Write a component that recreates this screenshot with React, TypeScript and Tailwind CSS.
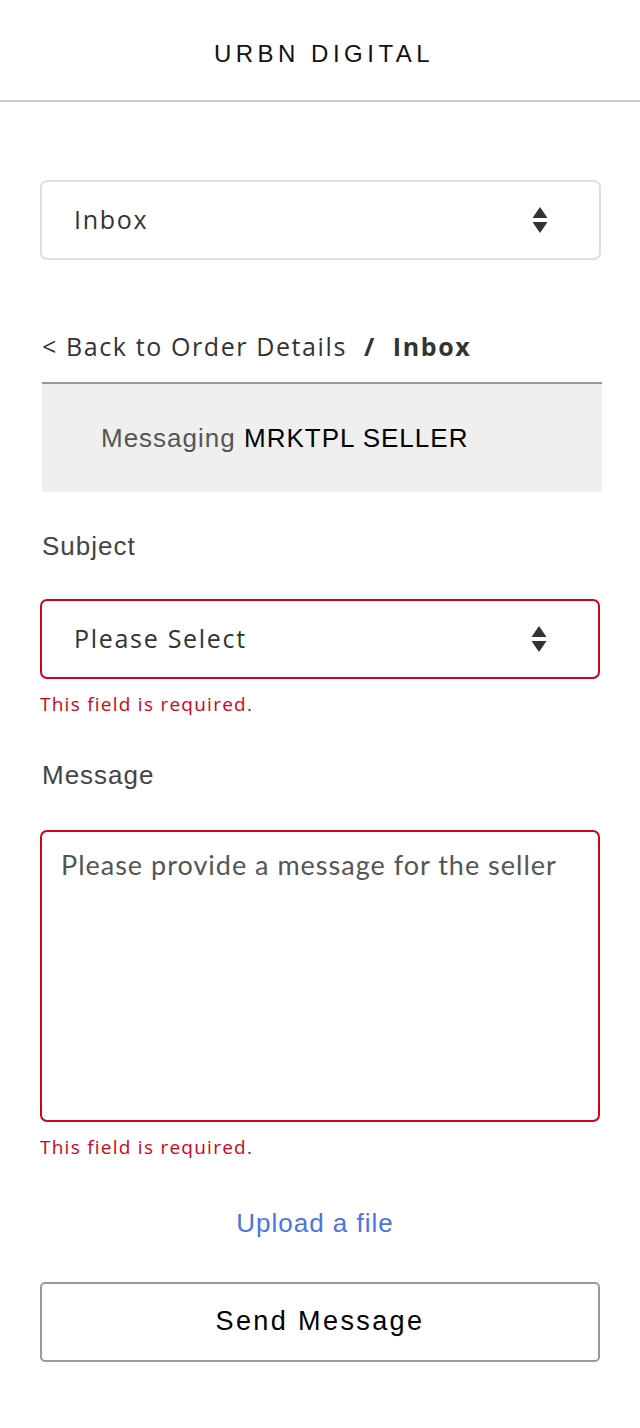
import React from "react";

const helv = { fontFamily: '"Liberation Sans", Arial, sans-serif' };
const open = { fontFamily: '"Open Sans", "Noto Sans", sans-serif' };
const lato = { fontFamily: 'Lato, "Open Sans", sans-serif' };

function Arrows() {
	return (
		<svg width="16" height="30" viewBox="0 0 16 30" className="shrink-0">
			<path d="M8 2 L15.5 13 L0.5 13 Z" fill="#333" />
			<path d="M0.5 17 L15.5 17 L8 28 Z" fill="#333" />
		</svg>
	);
}

function SelectBox({ label, error }: { label: string; error?: boolean }) {
	return (
		<div
			className={`flex h-[80px] items-center justify-between rounded-[7px] border-2 bg-white pr-[51px] pl-[32px] ${
				error ? "border-[#d0021b]" : "border-[#dedede]"
			}`}
		>
			<span className="text-[25px] tracking-[1.7px] text-[#333]" style={open}>
				{label}
			</span>
			<Arrows />
		</div>
	);
}

function ErrorText() {
	return (
		<p
			className="mt-[12px] text-[19px] leading-[26px] tracking-[1.25px] text-[#d0021b]"
			style={open}
		>
			This field is required.
		</p>
	);
}

export default function App() {
	return (
		<div className="min-h-[1428px] bg-white">
			<header className="flex h-[102px] items-center justify-center border-b-2 border-[#cfcfcf] pt-[8px] pl-[8px]">
				<h1
					className="text-[24px] tracking-[4.5px] text-[#111]"
					style={helv}
				>
					URBN DIGITAL
				</h1>
			</header>

			<main className="px-[40px] pt-[78px] pb-[66px]">
				<div className="mr-[-1px]">
					<SelectBox label="Inbox" />
				</div>

				<nav
					className="mt-[68px] flex items-center pl-[2px] text-[25px] tracking-[1.6px] text-[#333]"
					style={open}
				>
					<span>&lt; Back to Order Details</span>
					<span className="mx-[17px] font-bold">/</span>
					<span className="font-bold">Inbox</span>
				</nav>

				<div className="mt-[16px] ml-[2px] mr-[-2px] border-t-2 border-[#999] bg-[#efefef] py-[40px] pl-[59px]">
					<p className="text-[26px] leading-[28px] tracking-[1px]" style={helv}>
						<span className="text-[#555]">Messaging </span>
						<span className="text-black">MRKTPL SELLER</span>
					</p>
				</div>

				<label
					className="mt-[40px] block pl-[2px] text-[26px] leading-[28px] tracking-[1px] text-[#444]"
					style={helv}
				>
					Subject
				</label>
				<div className="mt-[39px]">
					<SelectBox label="Please Select" error />
				</div>
				<ErrorText />

				<label
					className="mt-[44px] block pl-[2px] text-[26px] leading-[28px] tracking-[1px] text-[#444]"
					style={helv}
				>
					Message
				</label>
				<div className="mt-[41px] h-[292px] rounded-[7px] border-2 border-[#d0021b] px-[19px] pt-[16px]">
					<p className="text-[27px] leading-[34px] tracking-[1px] text-[#555]" style={lato}>
						Please provide a message for the seller
					</p>
				</div>
				<ErrorText />

				<div className="mt-[44px] pr-[10px] text-center">
					<a
						className="text-[26px] tracking-[1px] text-[#4a74e0]"
						style={helv}
					>
						Upload a file
					</a>
				</div>

				<button
					className="mt-[39px] flex h-[80px] w-full items-center justify-center rounded-[5px] border-2 border-[#9a9a9a] bg-white text-[27px] tracking-[2.4px] text-black"
					style={helv}
				>
					Send Message
				</button>
			</main>
		</div>
	);
}
